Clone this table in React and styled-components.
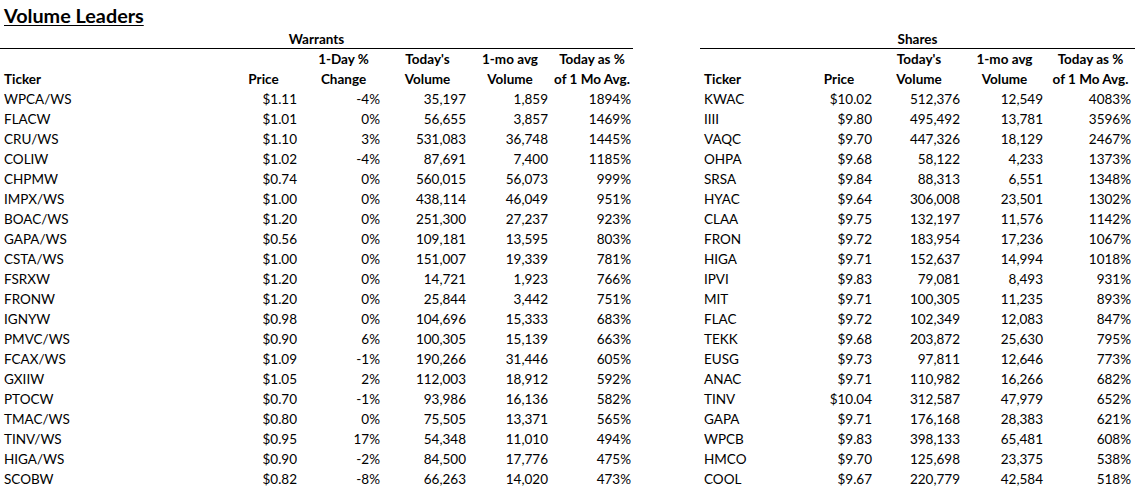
import React from 'react';
import styled, { createGlobalStyle } from 'styled-components';

const GlobalStyle = createGlobalStyle`
  html, body {
    margin: 0;
    padding: 0;
    background: #fff;
  }

  body {
    font-family: Lato, 'Open Sans', sans-serif;
    color: #000;
  }
`;

const warrants = [
  ['WPCA/WS', '$1.11', '-4%', '35,197', '1,859', '1894%'],
  ['FLACW', '$1.01', '0%', '56,655', '3,857', '1469%'],
  ['CRU/WS', '$1.10', '3%', '531,083', '36,748', '1445%'],
  ['COLIW', '$1.02', '-4%', '87,691', '7,400', '1185%'],
  ['CHPMW', '$0.74', '0%', '560,015', '56,073', '999%'],
  ['IMPX/WS', '$1.00', '0%', '438,114', '46,049', '951%'],
  ['BOAC/WS', '$1.20', '0%', '251,300', '27,237', '923%'],
  ['GAPA/WS', '$0.56', '0%', '109,181', '13,595', '803%'],
  ['CSTA/WS', '$1.00', '0%', '151,007', '19,339', '781%'],
  ['FSRXW', '$1.20', '0%', '14,721', '1,923', '766%'],
  ['FRONW', '$1.20', '0%', '25,844', '3,442', '751%'],
  ['IGNYW', '$0.98', '0%', '104,696', '15,333', '683%'],
  ['PMVC/WS', '$0.90', '6%', '100,305', '15,139', '663%'],
  ['FCAX/WS', '$1.09', '-1%', '190,266', '31,446', '605%'],
  ['GXIIW', '$1.05', '2%', '112,003', '18,912', '592%'],
  ['PTOCW', '$0.70', '-1%', '93,986', '16,136', '582%'],
  ['TMAC/WS', '$0.80', '0%', '75,505', '13,371', '565%'],
  ['TINV/WS', '$0.95', '17%', '54,348', '11,010', '494%'],
  ['HIGA/WS', '$0.90', '-2%', '84,500', '17,776', '475%'],
  ['SCOBW', '$0.82', '-8%', '66,263', '14,020', '473%'],
];

const shares = [
  ['KWAC', '$10.02', '512,376', '12,549', '4083%'],
  ['IIII', '$9.80', '495,492', '13,781', '3596%'],
  ['VAQC', '$9.70', '447,326', '18,129', '2467%'],
  ['OHPA', '$9.68', '58,122', '4,233', '1373%'],
  ['SRSA', '$9.84', '88,313', '6,551', '1348%'],
  ['HYAC', '$9.64', '306,008', '23,501', '1302%'],
  ['CLAA', '$9.75', '132,197', '11,576', '1142%'],
  ['FRON', '$9.72', '183,954', '17,236', '1067%'],
  ['HIGA', '$9.71', '152,637', '14,994', '1018%'],
  ['IPVI', '$9.83', '79,081', '8,493', '931%'],
  ['MIT', '$9.71', '100,305', '11,235', '893%'],
  ['FLAC', '$9.72', '102,349', '12,083', '847%'],
  ['TEKK', '$9.68', '203,872', '25,630', '795%'],
  ['EUSG', '$9.73', '97,811', '12,646', '773%'],
  ['ANAC', '$9.71', '110,982', '16,266', '682%'],
  ['TINV', '$10.04', '312,587', '47,979', '652%'],
  ['GAPA', '$9.71', '176,168', '28,383', '621%'],
  ['WPCB', '$9.83', '398,133', '65,481', '608%'],
  ['HMCO', '$9.70', '125,698', '23,375', '538%'],
  ['COOL', '$9.67', '220,779', '42,584', '518%'],
];

// column width, and right padding of the values
const warrantCols = [
  { w: 226, pad: 0 },
  { w: 75, pad: 4 },
  { w: 85, pad: 6 },
  { w: 83, pad: 3 },
  { w: 82, pad: 3 },
  { w: 82, pad: 2 },
];

const shareCols = [
  { w: 103, pad: 0 },
  { w: 72, pad: 3 },
  { w: 88, pad: 3 },
  { w: 83, pad: 3 },
  { w: 89, pad: 4 },
];

const Page = styled.div`
  width: 1135px;
  font-size: 13.5px;
`;

const Title = styled.h1`
  margin: 0;
  height: 29px;
  padding: 4px 0 0 4px;
  box-sizing: border-box;
  font-size: 19.8px;
  font-weight: 700;
  line-height: 22px;
  text-decoration: underline;
  text-decoration-thickness: 1px;
  text-underline-offset: 2px;
`;

const Tables = styled.div`
  display: flex;
  gap: 67px;
`;

const Section = styled.div`
  display: flex;
  flex-direction: column;
  width: ${(p) => p.$width}px;
`;

const GroupTitle = styled.div`
  height: 19px;
  line-height: 20px;
  text-align: center;
  font-weight: 700;
  border-bottom: 1px solid #000;
`;

const Row = styled.div`
  display: grid;
  grid-template-columns: ${(p) => p.$cols.map((c) => `${c.w}px`).join(' ')};
  height: 20px;
  line-height: 20px;
`;

const Cell = styled.div`
  white-space: nowrap;
  text-align: ${(p) => (p.$first ? 'left' : 'right')};
  padding-left: ${(p) => (p.$first ? '4px' : '0')};
  padding-right: ${(p) => p.$pad}px;
`;

const HeadCell = styled.div`
  white-space: nowrap;
  font-weight: 700;
  text-align: ${(p) => (p.$first ? 'left' : 'center')};
  padding-left: ${(p) => (p.$first ? '4px' : '0')};
`;

function DataTable({ title, cols, top, bottom, rows, width }) {
  return (
    <Section $width={width}>
      <GroupTitle>{title}</GroupTitle>
      <Row $cols={cols}>
        {top.map((t, i) => (
          <HeadCell key={i} $first={i === 0}>{t}</HeadCell>
        ))}
      </Row>
      <Row $cols={cols}>
        {bottom.map((t, i) => (
          <HeadCell key={i} $first={i === 0}>{t}</HeadCell>
        ))}
      </Row>
      {rows.map((r) => (
        <Row key={r[0]} $cols={cols}>
          {r.map((v, i) => (
            <Cell key={i} $first={i === 0} $pad={cols[i].pad}>{v}</Cell>
          ))}
        </Row>
      ))}
    </Section>
  );
}

export default function App() {
  return (
    <Page>
      <GlobalStyle />
      <Title>Volume Leaders</Title>
      <Tables>
        <DataTable
          title="Warrants"
          width={633}
          cols={warrantCols}
          top={['', '', '1-Day %', "Today's", '1-mo avg', 'Today as %']}
          bottom={['Ticker', 'Price', 'Change', 'Volume', 'Volume', 'of 1 Mo Avg.']}
          rows={warrants}
        />
        <DataTable
          title="Shares"
          width={435}
          cols={shareCols}
          top={['', '', "Today's", '1-mo avg', 'Today as %']}
          bottom={['Ticker', 'Price', 'Volume', 'Volume', 'of 1 Mo Avg.']}
          rows={shares}
        />
      </Tables>
    </Page>
  );
}
